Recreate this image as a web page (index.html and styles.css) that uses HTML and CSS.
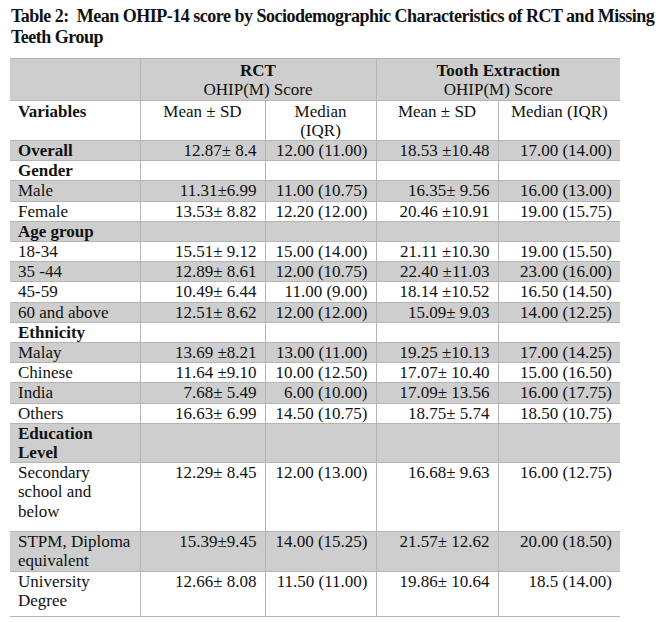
FILE: index.html
```html
<!DOCTYPE html>
<html lang="en">
<head>
<meta charset="utf-8">
<title>Table 2</title>
<link rel="stylesheet" href="styles.css">
</head>
<body>
<div class="page">
  <h1 class="title">Table 2:&nbsp; Mean OHIP-14 score by Sociodemographic Characteristics of RCT and Missing Teeth Group</h1>
  <table class="data">
    <colgroup>
      <col class="c-var">
      <col class="c-mean1">
      <col class="c-med1">
      <col class="c-mean2">
      <col class="c-med2">
    </colgroup>
    <thead>
      <tr class="shade head1">
        <th></th>
        <th colspan="2" class="grp"><b>RCT</b><br><span class="reg">OHIP(M) Score</span></th>
        <th colspan="2" class="grp"><b>Tooth Extraction</b><br><span class="reg">OHIP(M) Score</span></th>
      </tr>
      <tr class="head2">
        <th class="lbl">Variables</th>
        <th class="ctr">Mean ± SD</th>
        <th class="ctr med">Median (IQR)</th>
        <th class="ctr">Mean ± SD</th>
        <th class="ctr">Median (IQR)</th>
      </tr>
    </thead>
    <tbody>
      <tr class="shade"><td class="lbl b">Overall</td><td>12.87± 8.4</td><td>12.00 (11.00)</td><td>18.53 ±10.48</td><td>17.00 (14.00)</td></tr>
      <tr><td class="lbl b">Gender</td><td></td><td></td><td></td><td></td></tr>
      <tr class="shade"><td class="lbl">Male</td><td>11.31±6.99</td><td>11.00 (10.75)</td><td>16.35± 9.56</td><td>16.00 (13.00)</td></tr>
      <tr><td class="lbl">Female</td><td>13.53± 8.82</td><td>12.20 (12.00)</td><td>20.46 ±10.91</td><td>19.00 (15.75)</td></tr>
      <tr class="shade"><td class="lbl b">Age group</td><td></td><td></td><td></td><td></td></tr>
      <tr><td class="lbl">18-34</td><td>15.51± 9.12</td><td>15.00 (14.00)</td><td>21.11 ±10.30</td><td>19.00 (15.50)</td></tr>
      <tr class="shade"><td class="lbl">35 -44</td><td>12.89± 8.61</td><td>12.00 (10.75)</td><td>22.40 ±11.03</td><td>23.00 (16.00)</td></tr>
      <tr><td class="lbl">45-59</td><td>10.49± 6.44</td><td>11.00 (9.00)</td><td>18.14 ±10.52</td><td>16.50 (14.50)</td></tr>
      <tr class="shade"><td class="lbl">60 and above</td><td>12.51± 8.62</td><td>12.00 (12.00)</td><td>15.09± 9.03</td><td>14.00 (12.25)</td></tr>
      <tr><td class="lbl b">Ethnicity</td><td></td><td></td><td></td><td></td></tr>
      <tr class="shade"><td class="lbl">Malay</td><td>13.69 ±8.21</td><td>13.00 (11.00)</td><td>19.25 ±10.13</td><td>17.00 (14.25)</td></tr>
      <tr><td class="lbl">Chinese</td><td>11.64 ±9.10</td><td>10.00 (12.50)</td><td>17.07± 10.40</td><td>15.00 (16.50)</td></tr>
      <tr class="shade"><td class="lbl">India</td><td>7.68± 5.49</td><td>6.00 (10.00)</td><td>17.09± 13.56</td><td>16.00 (17.75)</td></tr>
      <tr><td class="lbl">Others</td><td>16.63± 6.99</td><td>14.50 (10.75)</td><td>18.75± 5.74</td><td>18.50 (10.75)</td></tr>
      <tr class="shade"><td class="lbl b">Education Level</td><td></td><td></td><td></td><td></td></tr>
      <tr class="row-sec"><td class="lbl">Secondary school and below</td><td>12.29± 8.45</td><td>12.00 (13.00)</td><td>16.68± 9.63</td><td>16.00 (12.75)</td></tr>
      <tr class="shade"><td class="lbl">STPM, Diploma equivalent</td><td>15.39±9.45</td><td>14.00 (15.25)</td><td>21.57± 12.62</td><td>20.00 (18.50)</td></tr>
      <tr class="row-uni"><td class="lbl">University Degree</td><td>12.66± 8.08</td><td>11.50 (11.00)</td><td>19.86± 10.64</td><td>18.5 (14.00)</td></tr>
    </tbody>
  </table>
</div>
</body>
</html>
```
FILE: styles.css
```css
html, body {
  margin: 0;
  padding: 0;
  background: #ffffff;
}

.page {
  padding: 6px 0 0 11px;
  font-family: "Liberation Serif", "Times New Roman", serif;
  color: #111111;
}

.title {
  margin: 0 0 10px 0;
  width: 648px;
  font-size: 18px;
  font-weight: bold;
  line-height: 21px;
  letter-spacing: -0.5px;
}

.data {
  margin-left: -1px;
  border-collapse: collapse;
  table-layout: fixed;
  width: 610px;
  font-size: 17px;
  line-height: 19.2px;
  border-top: 1px solid #b5b5b5;
}

.c-var { width: 130px; }
.c-mean1 { width: 125px; }
.c-med1 { width: 111px; }
.c-mean2 { width: 122px; }
.c-med2 { width: 122px; }

.data th,
.data td {
  padding: 0 8px;
  border-bottom: 1px solid #b5b5b5;
  border-left: 1px solid #b5b5b5;
  vertical-align: top;
  text-align: right;
  font-weight: normal;
}

.data th:first-child,
.data td:first-child {
  border-left: none;
}

.shade th,
.shade td {
  background: #cecece;
}

.head1 th {
  padding-top: 2px;
  padding-bottom: 1px;
  line-height: 19px;
  text-align: center;
}

.head1 .reg {
  font-weight: normal;
}

.head2 th {
  padding-top: 1px;
  line-height: 19px;
}

.data .ctr {
  text-align: center;
}

.data .med {
  padding-left: 22px;
  padding-right: 22px;
}

.data .lbl {
  text-align: left;
}

.data th.lbl,
.data .b {
  font-weight: bold;
}

.row-sec td {
  height: 68px;
}

.row-uni td {
  height: 44px;
}
```
